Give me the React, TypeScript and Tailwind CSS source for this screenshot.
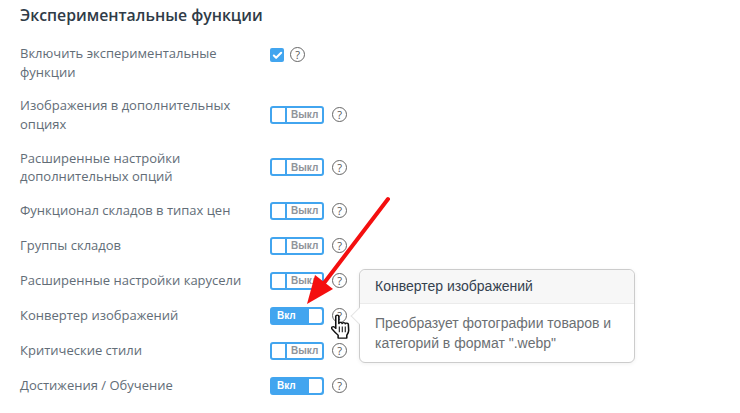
import { Check } from 'lucide-react';

function HelpIcon() {
  return (
    <span className="flex h-[15px] w-[15px] shrink-0 items-center justify-center rounded-full border border-[#666] font-['Open_Sans',sans-serif] text-[11px] leading-none text-[#555]">
      ?
    </span>
  );
}

function Toggle({ on }: { on: boolean }) {
  if (on) {
    return (
      <div className="flex h-[18px] w-[54px] items-center justify-between rounded-[3px] border-2 border-[#42a5ef] bg-[#42a5ef] font-['Liberation_Sans',sans-serif] text-[10px] font-bold text-white">
        <span className="pl-[5px]">Вкл</span>
        <span className="h-[14px] w-[13px] rounded-r-[2px] bg-white" />
      </div>
    );
  }
  return (
    <div className="flex h-[18px] w-[54px] items-center rounded-[3px] border-2 border-[#42a5ef] bg-white font-['Liberation_Sans',sans-serif] text-[10px] font-bold text-[#8f949a]">
      <span className="box-content h-[14px] w-[13px] border-r-2 border-[#42a5ef]" />
      <span className="pl-[4px]">Выкл</span>
    </div>
  );
}

function Row({ label, on }: { label: string; on: boolean }) {
  return (
    <div className="mb-[15px] flex min-h-5 items-center">
      <div className="w-[250px] shrink-0 pr-5 leading-[18.6px]">{label}</div>
      <div className="flex items-center gap-2">
        <Toggle on={on} />
        <HelpIcon />
      </div>
    </div>
  );
}

export default function App() {
  return (
    <div className="relative h-[413px] w-[740px] overflow-hidden bg-white px-5 pt-1 font-['Open_Sans',sans-serif] text-[13px] text-[#626d77]">
      <h3 className="mb-[18.2px] text-[15.8px] font-semibold leading-[22px] text-[#2f3b47]">Экспериментальные функции</h3>

      <div className="mb-[15px] flex">
        <div className="w-[250px] shrink-0 pr-5 leading-[18.6px]">Включить экспериментальные функции</div>
        <div className="flex items-start gap-[6px] pt-[3px]">
          <span className="mt-px flex h-[14px] w-[14px] items-center justify-center rounded-[2px] bg-[#42a5ef]">
            <Check size={11} strokeWidth={4.5} className="text-white" />
          </span>
          <HelpIcon />
        </div>
      </div>

      <Row label="Изображения в дополнительных опциях" on={false} />
      <Row label="Расширенные настройки дополнительных опций" on={false} />
      <Row label="Функционал складов в типах цен" on={false} />
      <Row label="Группы складов" on={false} />
      <Row label="Расширенные настройки карусели" on={false} />
      <Row label="Конвертер изображений" on />
      <Row label="Критические стили" on={false} />
      <Row label="Достижения / Обучение" on />

      {/* popover */}
      <div className="absolute left-[359px] top-[269px] w-[276px] rounded-[6px] border border-[#ccc] bg-white font-['Liberation_Sans',sans-serif] text-[14px] shadow-[0_1px_4px_rgba(0,0,0,0.06)]">
        <div className="absolute left-[-7px] top-[40px] h-3 w-3 rotate-45 border-b border-l border-[#e4e4e4] bg-white" />
        <div className="rounded-t-[6px] border-b border-[#ebebeb] bg-[#f7f7f7] px-[15px] py-[8px] leading-[17px] text-[#35424f]">
          Конвертер изображений
        </div>
        <div className="px-[15px] py-[9px] leading-[20px] text-[#6b6f73]">
          Преобразует фотографии товаров и категорий в формат ".webp"
        </div>
      </div>

      {/* red arrow */}
      <svg className="absolute left-0 top-0" width="740" height="413" viewBox="0 0 740 413" fill="none">
        <path d="M388 199 L321 287" stroke="#f40f0f" strokeWidth="4" strokeLinecap="round" />
        <path d="M307 304 L315 275 L333 289 Z" fill="#f40f0f" />
      </svg>

      {/* hand cursor */}
      <svg className="absolute left-[331px] top-[314px]" width="19" height="25" viewBox="1 0 16 26" preserveAspectRatio="none">
        <path
          d="M5 2.500c0-1.800 2.600-1.800 2.600 0V10c.2-1.500 2.600-1.600 2.800 0 .2-1.400 2.500-1.400 2.700.2.300-1.200 2.400-1 2.500.6l.3 6.200c0 2.500-.7 3.500-1.600 5v3H7v-3C5.500 20.500 3.500 18 1.800 15.500c-1-1.500.8-3 2.200-1.800L5 15Z"
          fill="#fff"
          stroke="#111"
          strokeWidth="1.300"
          strokeLinejoin="round"
        />
        <path d="M8 13v6M10.500 13v6M13 13v6" stroke="#111" strokeWidth="0.900" />
      </svg>
    </div>
  );
}
